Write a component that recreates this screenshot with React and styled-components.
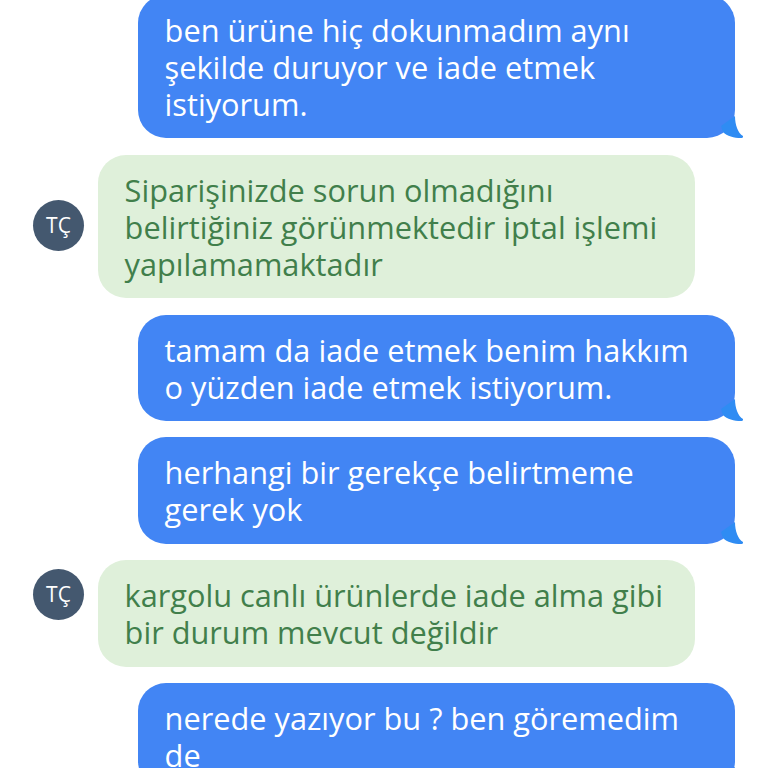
import React from "react";
import styled, { createGlobalStyle } from "styled-components";

const Global = createGlobalStyle`
  html, body { margin: 0; padding: 0; background: #fff; height: 768px; overflow: hidden; }
`;

const Thread = styled.div`
  width: 768px;
  height: 768px;
  overflow: hidden;
  font-family: "Open Sans", "Noto Sans", sans-serif;
`;

const Scroller = styled.div`
  display: flex;
  flex-direction: column;
  gap: 16.7px;
  margin-top: -5px;
`;

const OutRow = styled.div`
  display: flex;
  justify-content: flex-end;
  padding-right: 33px;
`;

const InRow = styled.div`
  display: flex;
  align-items: flex-start;
  padding-left: 33px;
  gap: 14px;
`;

const Bubble = styled.div`
  position: relative;
  width: 597px;
  box-sizing: border-box;
  padding: 17px 27px 15.4px 26.6px;
  border-radius: 28px;
  font-size: 30.73px;
  line-height: 36.9px;
  white-space: pre-line;
`;

const OutBubble = styled(Bubble)`
  background: #4285f4;
  color: #fff;
`;

const InBubble = styled(Bubble)`
  background: #dff0da;
  color: #417f4b;
`;

const Tail = styled.svg`
  position: absolute;
  right: -8px;
  bottom: 0;
  width: 22px;
  height: 22px;
`;

const Avatar = styled.div`
  width: 51px;
  height: 51px;
  flex: none;
  margin-top: ${(p) => p.$offset}px;
  border-radius: 50%;
  background: #44586f;
  color: #fff;
  display: flex;
  align-items: center;
  justify-content: center;
  font-size: 21px;
`;

const Out = ({ children }) => (
  <OutRow>
    <OutBubble>
      {children}
      <Tail viewBox="0 0 22 22">
        <path d="M14 0 C14 9 17 17 22 20 C22.5 21 22 22 20 22 C13 22 6 20 2 16 L0 10 Z" fill="#2f8cf3" />
      </Tail>
    </OutBubble>
  </OutRow>
);

const In = ({ offset, children }) => (
  <InRow>
    <Avatar $offset={offset}>TÇ</Avatar>
    <InBubble>{children}</InBubble>
  </InRow>
);

export default function App() {
  return (
    <>
      <Global />
      <Thread>
        <Scroller>
          <Out>{"ben ürüne hiç dokunmadım aynı\nşekilde duruyor ve iade etmek\nistiyorum."}</Out>
          <In offset={45}>{"Siparişinizde sorun olmadığını\nbelirtiğiniz görünmektedir iptal işlemi\nyapılamamaktadır"}</In>
          <Out>{"tamam da iade etmek benim hakkım\no yüzden iade etmek istiyorum."}</Out>
          <Out>{"herhangi bir gerekçe belirtmeme\ngerek yok"}</Out>
          <In offset={8.5}>{"kargolu canlı ürünlerde iade alma gibi\nbir durum mevcut değildir"}</In>
          <Out>{"nerede yazıyor bu ? ben göremedim\nde"}</Out>
        </Scroller>
      </Thread>
    </>
  );
}
